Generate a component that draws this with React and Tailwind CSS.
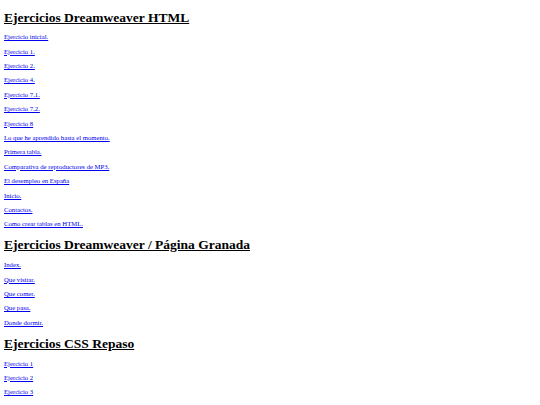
import React from 'react';

const sections = [
  {
    title: 'Ejercicios Dreamweaver HTML',
    links: [
      'Ejercicio inicial.',
      'Ejercicio 1.',
      'Ejercicio 2.',
      'Ejercicio 4.',
      'Ejercicio 7.1.',
      'Ejercicio 7.2.',
      'Ejercicio 8',
      'Lo que he aprendido hasta el momento.',
      'Primera tabla.',
      'Comparativa de reproductores de MP3.',
      'El desempleo en España',
      'Inicio.',
      'Contactos.',
      'Como crear tablas en HTML.',
    ],
  },
  {
    title: 'Ejercicios Dreamweaver / Página Granada',
    links: ['Index.', 'Que visitar.', 'Que comer.', 'Que pasa.', 'Donde dormir.'],
  },
  {
    title: 'Ejercicios CSS Repaso',
    links: ['Ejercicio 1', 'Ejercicio 2', 'Ejercicio 3', 'Ejercicio 4'],
  },
];

export default function App() {
  return (
    <div className="h-[405px] overflow-hidden bg-white px-[4px] pt-[5.5px] font-['Liberation_Serif',serif] text-black">
      {sections.map((s) => (
        <div key={s.title}>
          <h1 className="h-[23px] text-[13.5px] font-bold leading-[23px] underline">{s.title}</h1>
          <div className="flex flex-col items-start pt-[1.8px] pb-[1.6px]">
            {s.links.map((l) => (
              <a key={l} href="#" className="h-[14.4px] text-[6.7px] leading-[14.4px] text-[#0000ee] underline">
                {l}
              </a>
            ))}
          </div>
        </div>
      ))}
    </div>
  );
}
